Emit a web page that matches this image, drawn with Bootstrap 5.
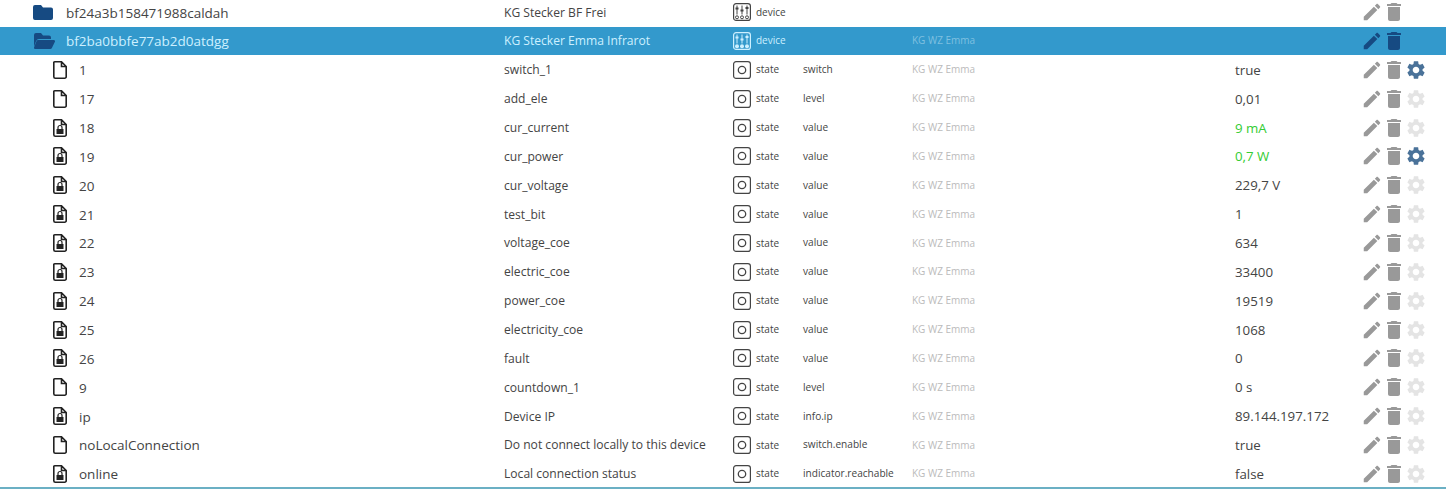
<!DOCTYPE html>
<html lang="en">
<head>
    <meta charset="UTF-8">
    <title>Objects</title>
    <link href="https://cdn.jsdelivr.net/npm/bootstrap@5.3.0/dist/css/bootstrap.min.css" rel="stylesheet">
    <style>
        html, body { height: 489px; overflow: hidden; background: #fff; }
        body { font-family: "Open Sans", "Noto Sans", sans-serif; font-size: 13.3px; color: #444; }
        .obj-list { height: 487px; overflow: hidden; }
        .obj-inner { margin-top: -2.3px; }
        .obj-end { height: 2px; background: #6bb0c4; }
        .obj-row { height: 28.86px; }
        .obj-row.is-open { background: #3399cc; color: #cdf0ff; }
        .cell-indent { width: 33px; }
        .is-child .cell-indent { width: 53px; }
        .cell-name { width: 438px; font-size: 13.5px; padding-top: 1px; }
        .is-child .cell-name { width: 425px; }
        .cell-branch { width: 33px; color: #164a82; }
        .is-child .cell-branch { width: 26px; color: #222; }
        .cell-title { width: 229px; font-size: 12.1px; padding-top: 1px; }
        .cell-type { width: 70px; font-size: 10px; }
        .cell-role { width: 109px; font-size: 10.1px; }
        .cell-room { width: 323px; font-size: 10px; color: #bbb; }
        .cell-value { width: 126px; padding-top: 2px; }
        .is-open .cell-room { color: #7fc0e0; }
        .val-ok { color: #33cc33; }
        .type-icon { width: 18px; height: 18px; margin-right: 5px; }
        .act-icon { fill: #999; }
        .act-edit { width: 22px; height: 22px; }
        .act-trash { width: 24px; height: 24px; margin-left: -1px; }
        .act-gear { width: 22px; height: 22px; margin-left: -1.5px; }
        .is-open .act-icon { fill: #164a82; }
        .act-gear { fill: #e4e4e4; }
        .act-gear.on { fill: #4a7299; }
        .folder-shut { width: 20px; height: 15px; }
        .folder-open { width: 22px; height: 16px; }
        .file-doc { width: 14px; height: 18px; }
    </style>
</head>
<body>
    <svg width="0" height="0" class="d-none">
        <symbol id="i-folder" viewBox="0 0 20 15"><path fill="currentColor" d="M2 0h6l2 2.500h8a2 2 0 0 1 2 2V13a2 2 0 0 1-2 2H2a2 2 0 0 1-2-2V2a2 2 0 0 1 2-2z"/></symbol>
        <symbol id="i-folder-open" viewBox="0 0 22 16"><path fill="currentColor" d="M1 2a2 2 0 0 1 2-2h5l2 2.500h6a2 2 0 0 1 2 2V6H6a3 3 0 0 0-2.800 1.900L1 13.500zM5 7h15.800c.9 0 1.500.9 1.100 1.700l-2.900 6.100a2 2 0 0 1-1.800 1.200H2.300c-.9 0-1.500-.9-1.200-1.700l2.500-6.300C3.900 7.400 4.400 7 5 7z"/></symbol>
        <symbol id="i-file" viewBox="0 0 14 18"><path fill="none" stroke="currentColor" stroke-width="1.600" d="M1.800.8h6.700l4.700 4.700V15.700a1.500 1.500 0 0 1-1.500 1.500H2.300a1.500 1.500 0 0 1-1.500-1.500V1.300zM8.500.8v4.700h4.700"/></symbol>
        <symbol id="i-file-lock" viewBox="0 0 14 18"><path fill="none" stroke="currentColor" stroke-width="1.600" d="M1.800.8h6.700l4.700 4.700V15.700a1.500 1.500 0 0 1-1.500 1.500H2.300a1.500 1.500 0 0 1-1.500-1.500V1.300zM8.500.8v4.700h4.700"/><path fill="currentColor" d="M3.500 10h7v5h-7z"/><path fill="none" stroke="currentColor" stroke-width="1.200" d="M5 10V8.500a2 2 0 0 1 4 0V10"/></symbol>
        <symbol id="i-device" viewBox="0 0 18 18">
            <rect x=".6" y=".6" width="16.800" height="16.800" rx="2.500" fill="none" stroke="currentColor" stroke-width="1.200"/>
            <path fill="none" stroke="currentColor" d="M4 2.500v9M9 2.500v9M14 2.500v9"/>
            <path fill="currentColor" d="M2.500 4.500h3v2h-3zM7.500 6.500h3v2h-3zM12.500 4h3v2h-3z"/>
            <circle cx="4" cy="14.300" r="1.500" fill="none" stroke="currentColor"/><circle cx="9" cy="14.300" r="1.500" fill="none" stroke="currentColor"/><circle cx="14" cy="14.300" r="1.500" fill="none" stroke="currentColor"/>
        </symbol>
        <symbol id="i-device-on" viewBox="0 0 18 18">
            <rect x=".6" y=".6" width="16.800" height="16.800" rx="2.500" fill="none" stroke="currentColor" stroke-width="1.200"/>
            <path fill="none" stroke="currentColor" d="M4 2.500v9M9 2.500v9M14 2.500v9"/>
            <path fill="currentColor" d="M2.500 4.500h3v2h-3zM7.500 6.500h3v2h-3zM12.500 4h3v2h-3z"/>
            <circle cx="4" cy="14.300" r="2" fill="currentColor"/><circle cx="9" cy="14.300" r="2" fill="currentColor"/><circle cx="14" cy="14.300" r="2" fill="currentColor"/>
        </symbol>
        <symbol id="i-state" viewBox="0 0 18 18">
            <rect x=".6" y=".6" width="16.800" height="16.800" rx="2.500" fill="none" stroke="currentColor" stroke-width="1.200"/>
            <circle cx="9" cy="9" r="3.700" fill="none" stroke="currentColor" stroke-width="1.300"/>
        </symbol>
        <symbol id="i-edit" viewBox="0 0 24 24"><path d="M3 17.250V21h3.750L17.810 9.940l-3.750-3.750L3 17.250zM20.710 7.040c.39-.39.39-1.020 0-1.410l-2.340-2.340c-.39-.39-1.020-.39-1.410 0l-1.830 1.830 3.750 3.750 1.830-1.830z"/></symbol>
        <symbol id="i-trash" viewBox="0 0 24 24"><path d="M6 19c0 1.100.9 2 2 2h8c1.100 0 2-.9 2-2V7H6v12zM19 4h-3.500l-1-1h-5l-1 1H5v2h14V4z"/></symbol>
        <symbol id="i-gear" viewBox="0 0 24 24"><path d="M19.140 12.940c.04-.3.06-.61.06-.94 0-.32-.02-.64-.07-.94l2.030-1.580c.18-.14.23-.41.12-.61l-1.920-3.320c-.12-.22-.37-.29-.59-.22l-2.390.96c-.5-.38-1.030-.7-1.620-.94l-.36-2.540c-.04-.24-.24-.41-.48-.41h-3.840c-.24 0-.43.17-.47.41l-.36 2.540c-.59.24-1.130.57-1.620.94l-2.390-.96c-.22-.08-.47 0-.59.22L2.740 8.870c-.12.21-.08.47.12.61l2.030 1.580c-.05.3-.09.63-.09.94s.02.64.07.94l-2.030 1.580c-.18.14-.23.41-.12.61l1.920 3.320c.12.22.37.29.59.22l2.390-.96c.5.38 1.030.7 1.620.94l.36 2.540c.05.24.24.41.48.41h3.840c.24 0 .44-.17.47-.41l.36-2.540c.59-.24 1.130-.56 1.620-.94l2.390.96c.22.08.47 0 .59-.22l1.920-3.320c.12-.22.07-.47-.12-.61l-2.010-1.580zM12 15.600c-1.980 0-3.600-1.620-3.600-3.600s1.620-3.600 3.600-3.600 3.600 1.620 3.600 3.600-1.620 3.600-3.600 3.600z"/></symbol>
    </svg>

    <div class="obj-list"><div class="obj-inner" id="rows"></div></div>
    <div class="obj-end"></div>

    <script src="https://cdn.jsdelivr.net/npm/bootstrap@5.3.0/dist/js/bootstrap.bundle.min.js"></script>
    <script>
        const ROOM = 'KG WZ Emma';
        // name, title, role, value, locked, gear on, value ok
        const states = [
            ['1', 'switch_1', 'switch', 'true', 0, 1, 0],
            ['17', 'add_ele', 'level', '0,01', 0, 0, 0],
            ['18', 'cur_current', 'value', '9 mA', 1, 0, 1],
            ['19', 'cur_power', 'value', '0,7 W', 1, 1, 1],
            ['20', 'cur_voltage', 'value', '229,7 V', 1, 0, 0],
            ['21', 'test_bit', 'value', '1', 1, 0, 0],
            ['22', 'voltage_coe', 'value', '634', 1, 0, 0],
            ['23', 'electric_coe', 'value', '33400', 1, 0, 0],
            ['24', 'power_coe', 'value', '19519', 1, 0, 0],
            ['25', 'electricity_coe', 'value', '1068', 1, 0, 0],
            ['26', 'fault', 'value', '0', 1, 0, 0],
            ['9', 'countdown_1', 'level', '0 s', 0, 0, 0],
            ['ip', 'Device IP', 'info.ip', '89.144.197.172', 1, 0, 0],
            ['noLocalConnection', 'Do not connect locally to this device', 'switch.enable', 'true', 0, 0, 0],
            ['online', 'Local connection status', 'indicator.reachable', 'false', 1, 0, 0]
        ];

        const use = (id, cls) => `<svg class="${cls}"><use href="#${id}"/></svg>`;

        function rowHtml(o) {
            return `
                <div class="obj-row d-flex align-items-center ${o.child ? 'is-child' : ''} ${o.open ? 'is-open' : ''}">
                    <div class="cell-indent"></div>
                    <div class="cell-branch d-flex">${use(o.branch, o.branchClass)}</div>
                    <div class="cell-name">${o.name}</div>
                    <div class="cell-title">${o.title}</div>
                    <div class="cell-type d-flex align-items-center">${use(o.type, 'type-icon')}${o.type === 'i-state' ? 'state' : 'device'}</div>
                    <div class="cell-role">${o.role}</div>
                    <div class="cell-room">${o.room}</div>
                    <div class="cell-value ${o.ok ? 'val-ok' : ''}">${o.value}</div>
                    <div class="d-flex align-items-center">
                        ${use('i-edit', 'act-icon act-edit')}${use('i-trash', 'act-icon act-trash')}${o.gear === null ? '' : use('i-gear', 'act-icon act-gear' + (o.gear ? ' on' : ''))}
                    </div>
                </div>`;
        }

        let html = rowHtml({ branch: 'i-folder', branchClass: 'folder-shut', name: 'bf24a3b158471988caldah', title: 'KG Stecker BF Frei', type: 'i-device', role: '', room: '', value: '', gear: null });
        html += rowHtml({ open: true, branch: 'i-folder-open', branchClass: 'folder-open', name: 'bf2ba0bbfe77ab2d0atdgg', title: 'KG Stecker Emma Infrarot', type: 'i-device-on', role: '', room: ROOM, value: '', gear: null });
        states.forEach(s => {
            html += rowHtml({ child: true, branch: s[4] ? 'i-file-lock' : 'i-file', branchClass: 'file-doc', name: s[0], title: s[1], type: 'i-state', role: s[2], room: ROOM, value: s[3], gear: s[5], ok: s[6] });
        });
        document.getElementById('rows').innerHTML = html;
    </script>
</body>
</html>
